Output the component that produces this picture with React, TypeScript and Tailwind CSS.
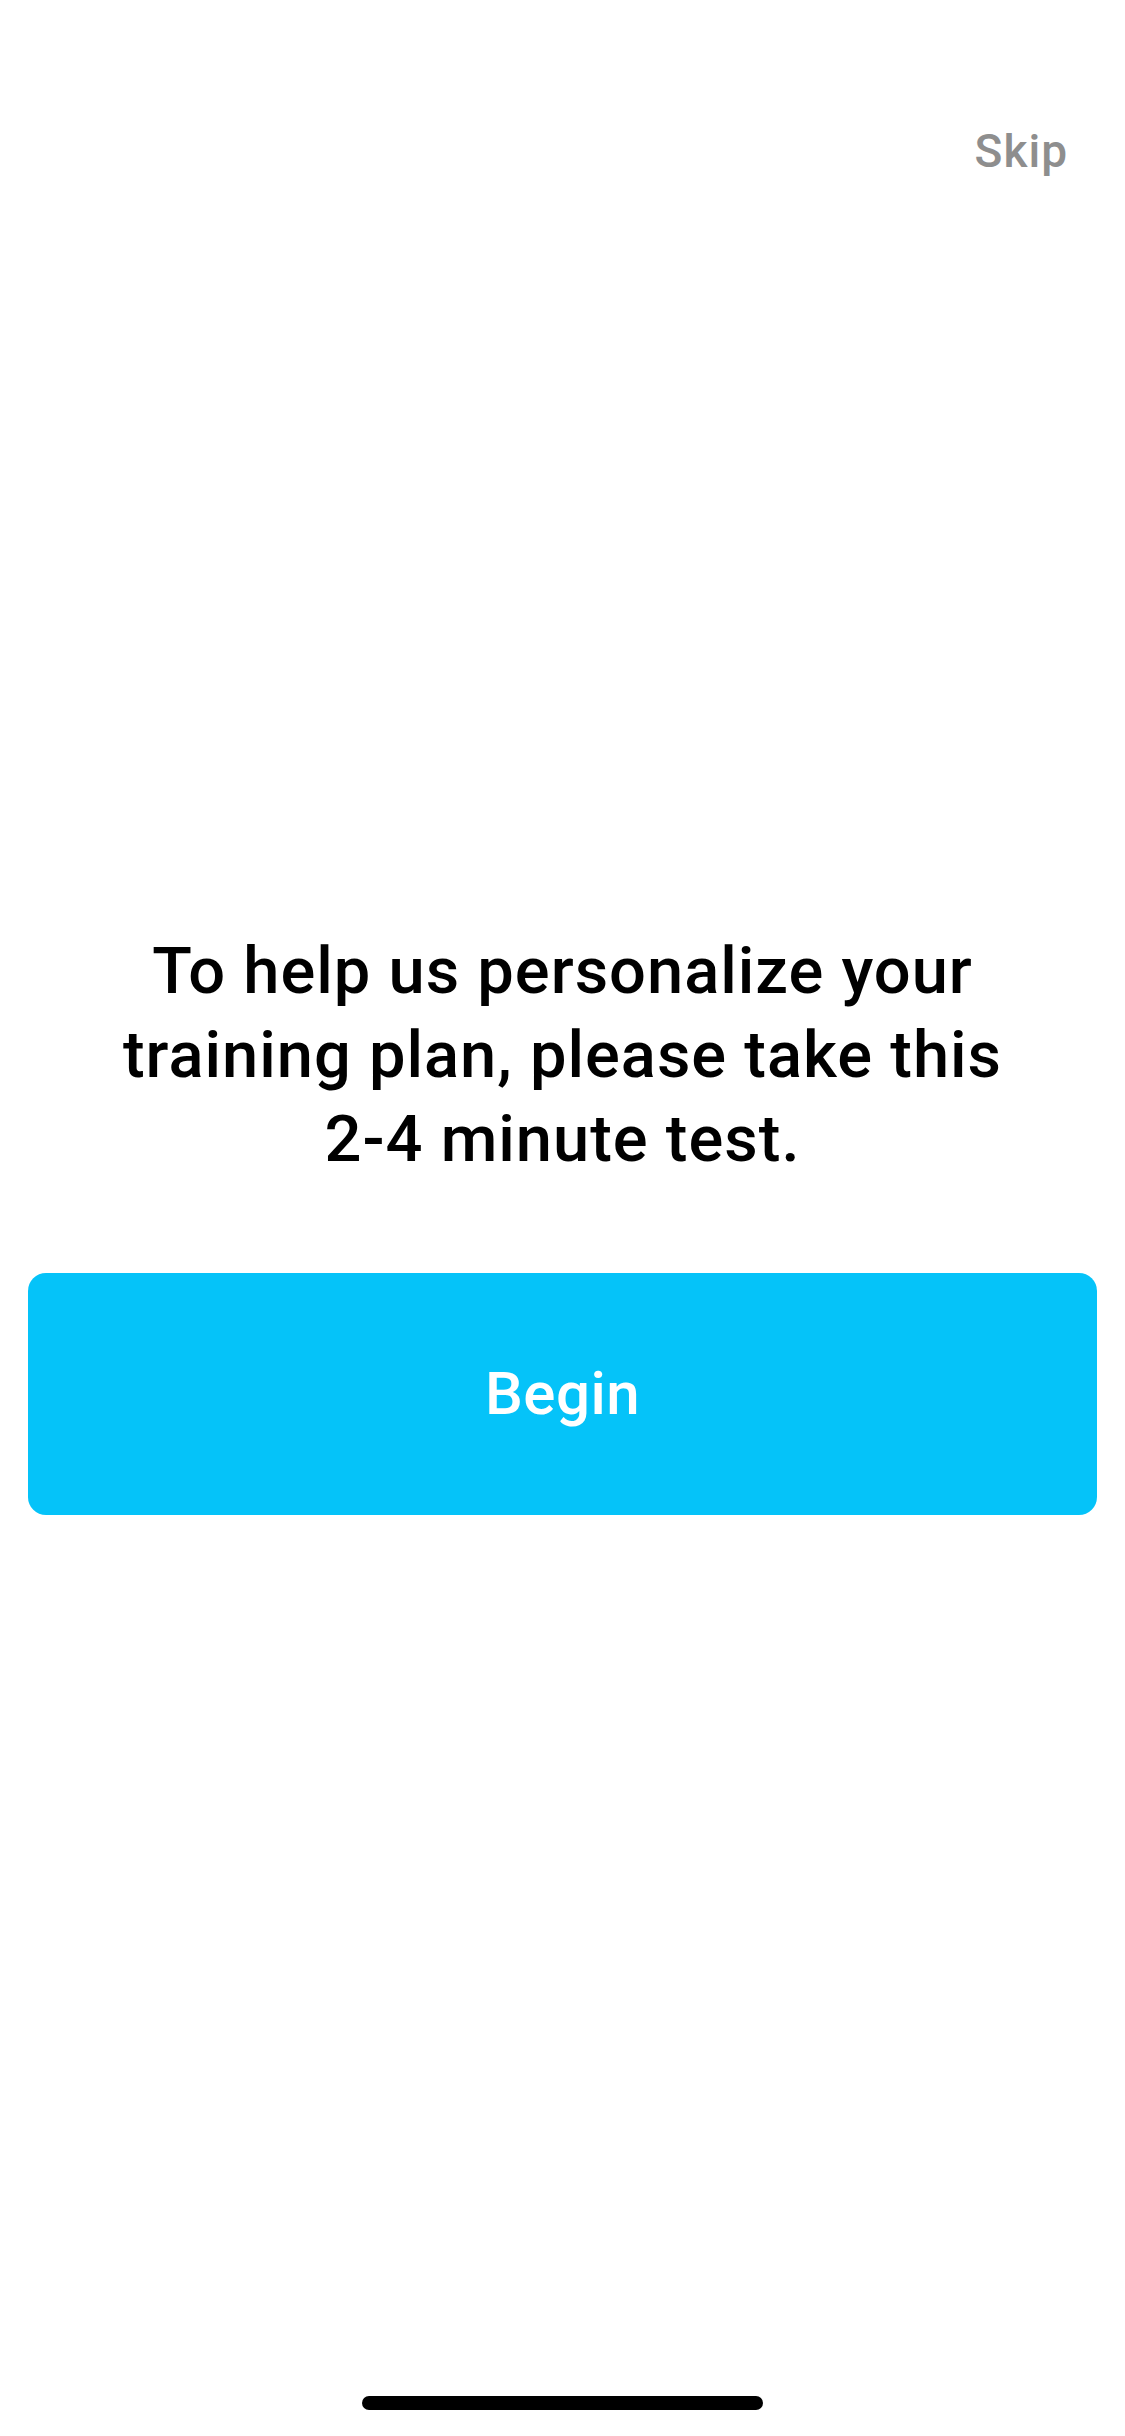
export default function App() {
  return (
    <div className="flex h-[2436px] w-[1125px] flex-col bg-white font-['Roboto',sans-serif]">
      <div className="flex justify-end px-[57px] pt-[128px]">
        <button className="text-[46px] leading-none font-medium tracking-[1px] text-[#8e8e8e]">Skip</button>
      </div>

      <div className="mt-[755px] flex flex-col px-[28px]">
        <p className="text-center text-[65px] leading-[84px] font-medium tracking-[1px] text-black">
          To help us personalize your
          <br />
          training plan, please take this
          <br />
          2-4 minute test.
        </p>

        <button className="mt-[92px] flex h-[242px] items-center justify-center rounded-[18px] bg-[#05c3f9] text-[60px] font-medium tracking-[0.5px] text-white">
          Begin
        </button>
      </div>

      <div className="mt-auto flex justify-center pb-[26px]">
        <div className="h-[14px] w-[401px] rounded-full bg-black" />
      </div>
    </div>
  );
}
